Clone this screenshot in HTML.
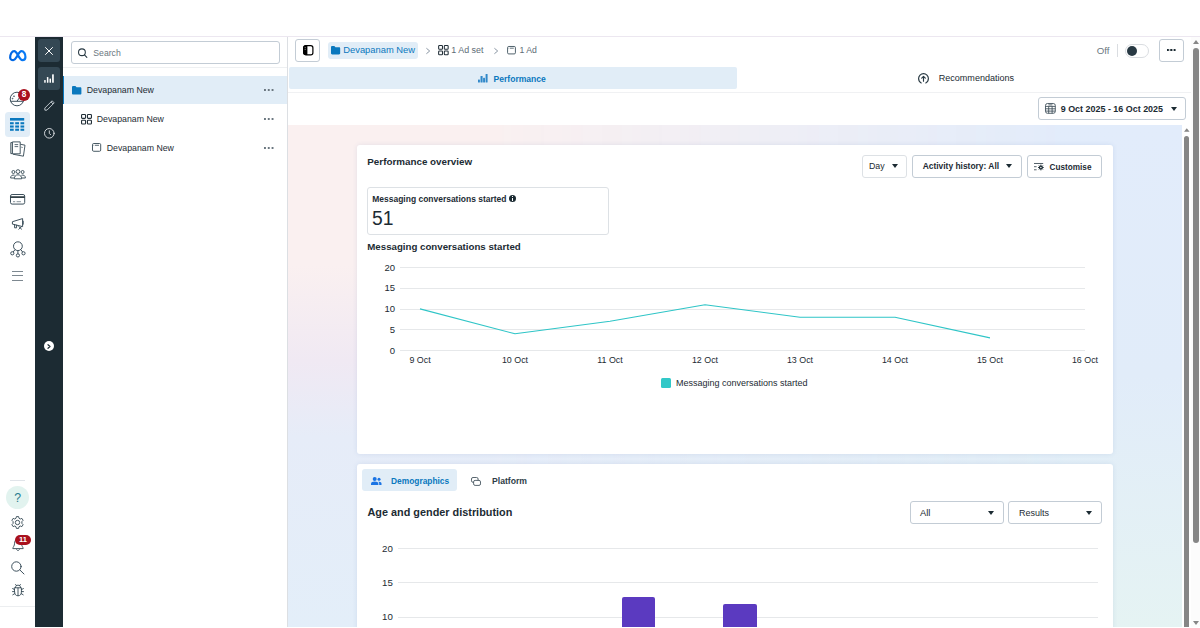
<!DOCTYPE html>
<html>
<head>
<meta charset="utf-8">
<title>Ads Manager</title>
<style>
*{box-sizing:border-box;margin:0;padding:0}
html,body{width:1200px;height:628px;overflow:hidden;background:#fff}
body{font-family:"Liberation Sans",sans-serif;color:#1c2b33;position:relative;font-size:8.75px}
.abs{position:absolute}
.t{position:absolute;white-space:nowrap;line-height:12px;height:12px}
.b{font-weight:700}
svg{position:absolute;overflow:visible;z-index:2}
.btn{position:absolute;border:1px solid #c3ccd5;border-radius:3px;background:#fff}
.gl{position:absolute;height:1px;background:#e6e8ea}
.xl{top:353.5px;width:60px;text-align:center;font-size:8.9px}
.car{position:absolute;z-index:2;width:0;height:0;border-left:3.6px solid transparent;border-right:3.6px solid transparent;border-top:4px solid #1c2b33}
.dots{position:absolute;z-index:2;width:9.6px;height:2px;background:radial-gradient(circle at 1px 1px,#6b7780 0.95px,transparent 1.15px) 0 0/3.8px 2px repeat-x}
.d2{width:9px;height:2.2px;background:radial-gradient(circle at 1.1px 1.1px,#1c2b33 1px,transparent 1.2px) 0 0/3.3px 2.2px repeat-x}
.sb{position:absolute;background:#868686}
</style>
</head>
<body>
<!-- top line -->
<div class="abs" style="left:0;top:36px;width:1200px;height:1px;background:#ece7f0"></div>

<!-- LEFT RAIL -->
<div id="rail" class="abs" style="left:0;top:37px;width:35px;height:591px;background:#fff"></div>
<div class="abs" style="left:0;top:606px;width:35px;height:1px;background:#eceef0"></div>
<!-- meta logo -->
<svg style="left:8.7px;top:49.8px" width="17.6" height="11.3" viewBox="0 0 17.6 11.3"><defs><linearGradient id="mg" x1="0" x2="1" y1="0" y2="0"><stop offset="0" stop-color="#0064e1"/><stop offset="1" stop-color="#0a7cf6"/></linearGradient></defs><path d="M1.15 7.6C1.15 4 3 1.15 5.2 1.15C8.4 1.15 10.1 10.15 13.4 10.15C15.3 10.15 16.45 8.9 16.45 7C16.45 3.8 14.7 1.15 12.5 1.15C9.3 1.15 7.6 10.15 4.2 10.15C2.3 10.15 1.15 9.2 1.15 7.6Z" fill="none" stroke="url(#mg)" stroke-width="2.2" stroke-linejoin="round"/></svg>
<!-- gauge -->
<svg style="left:9px;top:91px" width="16" height="16" viewBox="0 0 16 16" fill="none" stroke="#344854" stroke-width="0.95"><circle cx="8" cy="8" r="6.8"/><path d="M1.6 10.3H14.4"/><path d="M8 10.2L11.5 5.2"/><circle cx="5" cy="5.2" r="0.4"/><circle cx="3.6" cy="7.6" r="0.4"/></svg>
<div class="abs" style="z-index:3;left:18px;top:88.5px;width:12px;height:12px;border-radius:50%;background:#a9111e"></div>
<div class="t b" style="z-index:4;left:18px;top:88.6px;width:12px;text-align:center;color:#fff;font-size:8.2px">8</div>
<!-- table selected -->
<div class="abs" style="left:5px;top:112px;width:25px;height:24.5px;border-radius:3.5px;background:#e1edf7"></div>
<svg style="left:10.3px;top:118px" width="14.2" height="12.8" viewBox="0 0 14.2 12.8" fill="#0a78be"><rect x="0" y="0" width="14.2" height="2.6" /><rect x="0" y="4.2" width="3.7" height="2.1"/><rect x="5.2" y="4.2" width="3.8" height="2.1"/><rect x="10.5" y="4.2" width="3.7" height="2.1"/><rect x="0" y="7.5" width="3.7" height="2.1"/><rect x="5.2" y="7.5" width="3.8" height="2.1"/><rect x="10.5" y="7.5" width="3.7" height="2.1"/><rect x="0" y="10.7" width="3.7" height="2.1"/><rect x="5.2" y="10.7" width="3.8" height="2.1"/><rect x="10.5" y="10.7" width="3.7" height="2.1"/></svg>
<!-- docs -->
<svg style="left:9.5px;top:141px" width="16" height="16" viewBox="0 0 16 16" fill="none" stroke="#344854" stroke-width="0.9" stroke-linejoin="round"><path d="M10.2 3.2L15 4.2L13.4 15.2L3 13.2"/><path d="M0.8 1.6H2.4V12.6H0.8Z"/><path d="M2.4 0.9H10.2V12.8H2.4Z" fill="#fff"/><path d="M4.6 3.6H8.2M4.6 5.6H8.2" stroke-width="0.8"/><path d="M11.3 6.2L12.6 6.5" stroke-width="0.8"/></svg>
<!-- people -->
<svg style="left:9.5px;top:168.5px" width="16" height="10.5" viewBox="0 0 16 10.5" fill="none" stroke="#344854" stroke-width="0.9" stroke-linejoin="round"><circle cx="8" cy="2.6" r="1.9"/><circle cx="3.4" cy="3" r="1.5"/><circle cx="12.6" cy="3" r="1.5"/><path d="M4.3 9.8C4.3 7.4 5.8 5.8 8 5.8C10.2 5.8 11.7 7.4 11.7 9.8Z"/><path d="M4.6 6.3C2.3 5.4 0.6 6.8 0.6 9H4.3"/><path d="M11.4 6.3C13.7 5.4 15.4 6.8 15.4 9H11.7"/></svg>
<!-- card -->
<svg style="left:9.8px;top:193.8px" width="15.2" height="10.6" viewBox="0 0 15.2 10.6" fill="none" stroke="#344854"><rect x="0.5" y="0.5" width="14.2" height="9.6" rx="1.6" stroke-width="0.95"/><path d="M0.5 3.1H14.7" stroke-width="1.6" stroke="#1c2b33"/><path d="M3 7.7H5.2M6.6 7.7H11" stroke-width="0.9" stroke="#7a8790"/></svg>
<!-- megaphone -->
<svg style="left:11.5px;top:218px" width="12.5" height="12" viewBox="0 0 12.5 12" fill="none" stroke="#344854" stroke-width="0.95" stroke-linejoin="round" stroke-linecap="round"><path d="M0.8 3.6L10.6 0.6V8.6L0.8 6.2Z"/><path d="M2.6 6.7V9.8H4.6V7.2"/><path d="M11.2 3.2V6.2"/><path d="M6.8 8.6L9.6 11.2M9.6 8.6L6.8 11.2" stroke-width="0.9"/></svg>
<!-- network -->
<svg style="left:9.5px;top:240.5px" width="16" height="17" viewBox="0 0 16 17" fill="none" stroke="#344854" stroke-width="0.95"><circle cx="7.9" cy="5.2" r="4.4"/><circle cx="2.3" cy="12.3" r="1.6"/><circle cx="13.5" cy="12.3" r="1.6"/><circle cx="7.9" cy="14.4" r="1.6"/><path d="M7.9 9.6V12.8M5 8.6L3.2 11M10.8 8.6L12.6 11"/></svg>
<!-- hamburger -->
<div class="abs" style="left:12px;top:270.5px;width:11.2px;height:1px;background:#7d8890"></div>
<div class="abs" style="left:12px;top:275.2px;width:11.2px;height:1px;background:#7d8890"></div>
<div class="abs" style="left:12px;top:279.9px;width:11.2px;height:1px;background:#7d8890"></div>
<!-- bottom group -->
<div class="abs" style="left:10px;top:480.2px;width:15px;height:1.2px;background:#e0e4e9"></div>
<div class="abs" style="left:6.1px;top:486.4px;width:23px;height:23px;border-radius:50%;background:#e2f3ef"></div>
<div class="t" style="left:6.1px;top:490.7px;width:23px;text-align:center;color:#2a7b8e;font-size:12.3px;line-height:14px;height:14px">?</div>
<!-- gear -->
<svg style="left:11px;top:516px" width="13" height="13" viewBox="0 0 13 13" fill="none" stroke="#344854" stroke-width="0.9" stroke-linejoin="round"><path d="M5.4 0.6H7.6L8 2.3L9.3 3L10.9 2.4L12.1 4.3L10.9 5.6V7.4L12.1 8.7L10.9 10.6L9.3 10L8 10.7L7.6 12.4H5.4L5 10.7L3.7 10L2.1 10.6L0.9 8.7L2.1 7.4V5.6L0.9 4.3L2.1 2.4L3.7 3L5 2.3Z"/><circle cx="6.5" cy="6.5" r="2.2"/></svg>
<!-- bell -->
<svg style="left:11.5px;top:538px" width="12" height="14" viewBox="0 0 12 14" fill="none" stroke="#344854" stroke-width="0.9" stroke-linejoin="round"><path d="M6 1C3.6 1 2.6 3 2.6 5.2C2.6 8 0.8 9.2 0.8 10.6H11.2C11.2 9.2 9.4 8 9.4 5.2C9.4 3 8.4 1 6 1Z"/><path d="M4.4 11.2L6 12.8L7.6 11.2"/></svg>
<div class="abs" style="z-index:3;left:15.2px;top:534.7px;width:15.8px;height:10.2px;border-radius:5.1px;background:#a9111e"></div>
<div class="t b" style="z-index:4;left:15.2px;top:533.9px;width:15.8px;text-align:center;color:#fff;font-size:7.6px">11</div>
<!-- search -->
<svg style="left:10.5px;top:560.5px" width="14" height="14" viewBox="0 0 14 14" fill="none" stroke="#344854" stroke-width="0.95" stroke-linecap="round"><circle cx="5.4" cy="5.5" r="4.7"/><path d="M8.9 9L13 13"/></svg>
<!-- bug -->
<svg style="left:11.5px;top:583.5px" width="12" height="12.5" viewBox="0 0 12 12.5" fill="none" stroke="#344854" stroke-width="0.9" stroke-linecap="round" stroke-linejoin="round"><path d="M3.4 3.6C3.4 2 4.4 1.2 6 1.2C7.6 1.2 8.6 2 8.6 3.6"/><path d="M2.6 3.8H9.4V8.2C9.4 10.4 8 11.8 6 11.8C4 11.8 2.6 10.4 2.6 8.2Z"/><path d="M6 4V11.6"/><path d="M2.6 5.6L0.6 4.6M2.6 7.6H0.5M2.8 9.6L0.8 10.8M9.4 5.6L11.4 4.6M9.4 7.6H11.5M9.2 9.6L11.2 10.8M4.4 1.6L3.6 0.5M7.6 1.6L8.4 0.5"/></svg>


<!-- DARK BAR -->
<div id="dark" class="abs" style="left:35px;top:37px;width:27.5px;height:590px;background:#1c2b33"></div>
<div class="abs" style="left:38px;top:39px;width:22px;height:22.5px;border-radius:3px;background:#344854"></div>
<div class="abs" style="left:38px;top:67px;width:22px;height:22.5px;border-radius:3px;background:#344854"></div>
<svg style="left:45px;top:46.5px" width="8" height="8" viewBox="0 0 8 8" fill="none" stroke="#fff" stroke-width="1" stroke-linecap="round"><path d="M0.5 0.5L7.5 7.5M7.5 0.5L0.5 7.5"/></svg>
<svg style="left:44px;top:73.5px" width="10" height="9" viewBox="0 0 10 9" fill="#fff"><rect x="0.2" y="6" width="1.5" height="2.8" rx="0.5"/><rect x="2.9" y="3" width="1.5" height="5.8" rx="0.5"/><rect x="5.5" y="4.4" width="1.5" height="4.4" rx="0.5"/><rect x="8.1" y="0.2" width="1.7" height="8.6" rx="0.5"/></svg>
<svg style="left:43.5px;top:99.5px" width="11" height="11" viewBox="0 0 11 11" fill="none" stroke="#c9d1d7" stroke-width="0.9" stroke-linejoin="round"><path d="M8.1 0.8L10.2 2.9L3 10.1L0.9 10.2L0.8 8.1Z"/><path d="M7 1.9L9.1 4"/></svg>
<svg style="left:43.5px;top:127.5px" width="11" height="11" viewBox="0 0 11 11" fill="none" stroke="#e4e8eb" stroke-width="0.9" stroke-linecap="round"><circle cx="5.3" cy="5.3" r="4.8"/><path d="M5.3 2.8V5.4L6.6 6.7"/></svg>
<div class="abs" style="left:43.7px;top:341px;width:10px;height:10px;border-radius:50%;background:#fff"></div>
<svg style="left:47.3px;top:343.6px" width="4" height="5" viewBox="0 0 4 5" fill="none" stroke="#1c2b33" stroke-width="1.2" stroke-linecap="round" stroke-linejoin="round"><path d="M1 0.7L3 2.5L1 4.3"/></svg>


<!-- TREE PANEL -->
<div id="tree" class="abs" style="left:62.5px;top:37px;width:225px;height:590px;background:#fff"></div>
<div class="abs" style="left:287px;top:37px;width:1px;height:590px;background:#dcdfe3"></div>
<div class="abs" style="left:63px;top:67px;width:224px;height:1px;background:#eef0f2"></div>
<div class="btn" style="left:71px;top:41px;width:208.5px;height:22.5px"></div>
<div class="t" style="left:93.3px;top:46.8px;color:#6b7780;font-size:8.68px">Search</div>
<!-- selected row -->
<div class="abs" style="left:63px;top:75.5px;width:224px;height:28.5px;background:#e1edf7"></div>
<div class="abs" style="left:62.5px;top:75.5px;width:1.5px;height:28.5px;background:#0a78be"></div>
<div class="t" style="left:86.8px;top:84.3px">Devapanam New</div>
<div class="t" style="left:96.8px;top:113.3px">Devapanam New</div>
<div class="t" style="left:106.8px;top:142px">Devapanam New</div>
<svg style="left:77.9px;top:47.6px" width="9.4" height="10.2" viewBox="0 0 11 12" fill="none" stroke="#283943" stroke-width="1.25" stroke-linecap="round"><circle cx="4.6" cy="5" r="4"/><path d="M7.6 8L10.4 11"/></svg>
<svg style="left:71.8px;top:85.6px" width="9.4" height="8.6" viewBox="0 0 9.4 8.6"><path d="M0 1.2C0 0.5 0.5 0 1.2 0H3.4L4.6 1.3H8.4C9 1.3 9.4 1.8 9.4 2.4V7.4C9.4 8.1 8.9 8.6 8.2 8.6H1.2C0.5 8.6 0 8.1 0 7.4Z" fill="#0a78be"/></svg>
<svg style="left:80.8px;top:113.5px" width="11" height="10.6" viewBox="0 0 11 10.6" fill="none" stroke="#222f38" stroke-width="1.1"><rect x="0.55" y="0.55" width="4" height="3.8" rx="0.8"/><rect x="6.45" y="0.55" width="4" height="3.8" rx="0.8"/><rect x="0.55" y="6.25" width="4" height="3.8" rx="0.8"/><rect x="6.45" y="6.25" width="4" height="3.8" rx="0.8"/></svg>
<svg style="left:91.8px;top:143px" width="9.2" height="8.8" viewBox="0 0 9.2 8.8" fill="none" stroke="#344854" stroke-width="0.9"><rect x="0.5" y="0.5" width="8.2" height="7.8" rx="1.2"/><path d="M3 2.3H7" stroke-width="0.8"/><path d="M1.6 2.3H2.2" stroke-width="0.8"/></svg>
<div class="dots" style="left:264px;top:89px"></div><div class="dots" style="left:264px;top:118px"></div><div class="dots" style="left:264px;top:146.7px"></div>


<!-- MAIN -->
<div id="main" class="abs" style="left:288px;top:37px;width:903px;height:590px;background:#fff"></div>
<!-- header row -->
<div class="btn" style="left:295px;top:39px;width:25px;height:22.5px"></div>
<div class="abs" style="left:327.5px;top:42px;width:90.5px;height:17px;border-radius:3px;background:#e1edf7"></div>
<div class="t" style="left:343.3px;top:44.1px;color:#0a78be;font-size:9.36px">Devapanam New</div>
<div class="t" style="left:451.3px;top:44.1px;color:#5d6c76;font-size:8.9px">1 Ad set</div>
<div class="t" style="left:519.5px;top:44.1px;color:#5d6c76;font-size:8.7px">1 Ad</div>
<div class="t" style="left:1096.7px;top:44.5px;color:#6b7780;font-size:9.7px">Off</div>
<div class="abs" style="left:1117px;top:44px;width:1px;height:13px;background:#dadde1"></div>
<div class="abs" style="left:1124.5px;top:44px;width:24.5px;height:13.5px;border-radius:7px;border:1px solid #dadde1;background:#fff"></div>
<div class="abs" style="left:1126.7px;top:45.5px;width:10.2px;height:10.2px;border-radius:50%;background:#283943"></div>
<div class="btn" style="left:1158.7px;top:39px;width:25.3px;height:22.5px"></div>
<svg style="left:302.5px;top:45.2px" width="10.5" height="10.4" viewBox="0 0 10.5 10.4"><rect x="0.6" y="0.6" width="9.3" height="9.2" rx="2.1" fill="#fff" stroke="#000" stroke-width="1.2"/><path d="M2.6 0.3H4.4V10.1H2.6C1.2 10.1 0.2 9.1 0.2 7.7V2.7C0.2 1.3 1.2 0.3 2.6 0.3Z" fill="#000"/><rect x="1.6" y="2.2" width="1.3" height="0.9" fill="#777"/><rect x="1.6" y="3.9" width="1.3" height="0.9" fill="#777"/></svg>
<svg style="left:330.5px;top:46.2px" width="9.2" height="8.4" viewBox="0 0 9.4 8.6"><path d="M0 1.2C0 0.5 0.5 0 1.2 0H3.4L4.6 1.3H8.4C9 1.3 9.4 1.8 9.4 2.4V7.4C9.4 8.1 8.9 8.6 8.2 8.6H1.2C0.5 8.6 0 8.1 0 7.4Z" fill="#0a78be"/></svg>
<svg style="left:425.5px;top:47.5px" width="4.4" height="6" viewBox="0 0 4.4 6" fill="none" stroke="#8a96a3" stroke-width="1" stroke-linecap="round" stroke-linejoin="round"><path d="M0.7 0.5L3.7 3L0.7 5.5"/></svg>
<svg style="left:494px;top:47.5px" width="4.4" height="6" viewBox="0 0 4.4 6" fill="none" stroke="#8a96a3" stroke-width="1" stroke-linecap="round" stroke-linejoin="round"><path d="M0.7 0.5L3.7 3L0.7 5.5"/></svg>
<svg style="left:438px;top:45.4px" width="10.8" height="10.2" viewBox="0 0 11 10.6" fill="none" stroke="#222f38" stroke-width="1.1"><rect x="0.55" y="0.55" width="4" height="3.8" rx="0.8"/><rect x="6.45" y="0.55" width="4" height="3.8" rx="0.8"/><rect x="0.55" y="6.25" width="4" height="3.8" rx="0.8"/><rect x="6.45" y="6.25" width="4" height="3.8" rx="0.8"/></svg>
<svg style="left:507px;top:46.2px" width="9" height="8.4" viewBox="0 0 9.2 8.8" fill="none" stroke="#344854" stroke-width="0.9"><rect x="0.5" y="0.5" width="8.2" height="7.8" rx="1.2"/><path d="M3 2.3H7" stroke-width="0.8"/><path d="M1.6 2.3H2.2" stroke-width="0.8"/></svg>
<div class="dots d2" style="left:1167px;top:49.4px"></div>
<svg style="left:478.4px;top:73.5px" width="9.6" height="8.6" viewBox="0 0 9.6 8.6" fill="#3088c9"><rect x="0" y="5.6" width="1.9" height="3" rx="0.5"/><rect x="2.5" y="2" width="2.1" height="6.6" rx="0.5"/><rect x="5.1" y="3.8" width="1.9" height="4.8" rx="0.5"/><rect x="7.6" y="0" width="2" height="8.6" rx="0.5"/></svg>
<svg style="left:918.3px;top:72.5px" width="11" height="11" viewBox="0 0 11 11" fill="none" stroke="#283943" stroke-width="1.15" stroke-linecap="round" stroke-linejoin="round"><path d="M3.2 9.9C1.6 9.1 0.6 7.4 0.6 5.5C0.6 2.8 2.8 0.6 5.5 0.6C8.2 0.6 10.4 2.8 10.4 5.5C10.4 7.4 9.4 9.1 7.8 9.9"/><path d="M5.5 8.2V3.6M3.7 5.2L5.5 3.4L7.3 5.2"/></svg>
<svg style="left:1045.1px;top:103.1px" width="10.8" height="10.8" viewBox="0 0 10.8 10.8" fill="none" stroke="#3a4a55" stroke-width="0.85"><rect x="0.5" y="0.5" width="9.8" height="9.8" rx="2"/><path d="M0.5 3.4H10.3M0.5 5.8H10.3M0.5 8.1H10.3M3.7 3.4V10.3M7.1 3.4V10.3M3.4 1.9H7.4"/></svg>
<div class="car" style="left:1170.5px;top:106.8px"></div>

<!-- tabs -->
<div class="abs" style="left:289px;top:67px;width:448px;height:22px;border-radius:2px;background:#e1edf7"></div>
<div class="t b" style="left:493.5px;top:72.5px;color:#0a78be;font-size:8.57px">Performance</div>
<div class="t" style="left:938.7px;top:72.3px;font-size:9.05px">Recommendations</div>
<div class="abs" style="left:288px;top:92px;width:903px;height:1px;background:#f0f1f3"></div>
<!-- date button -->
<div class="btn" style="left:1038px;top:97px;width:148.3px;height:22.7px"></div>
<div class="t b" style="left:1060.7px;top:102.7px;font-size:8.95px">9 Oct 2025 - 16 Oct 2025</div>

<!-- CONTENT BG -->
<div id="content" class="abs" style="left:288px;top:125px;width:894px;height:502px;background:linear-gradient(to bottom, #e2ecfb 0%, #e1ecf9 50%, #e5f3f3 100%)"></div>
<div class="abs" style="left:288px;top:125px;width:894px;height:502px;background:linear-gradient(to bottom, #faf0f0 0%, #faf0f0 28%, #f0e9f3 47%, #e6ecf8 62%, #e3eef9 100%);-webkit-mask-image:linear-gradient(to right,#000 0%,#000 22%,transparent 88%);mask-image:linear-gradient(to right,#000 0%,#000 22%,transparent 88%)"></div>

<!-- SCROLLBARS -->
<div class="abs" style="left:1191px;top:37px;width:9px;height:590px;background:#fcfcfc"></div>
<div class="sb" style="left:1193.2px;top:47.5px;width:5.5px;height:495px;border-radius:3px"></div>
<svg style="left:1193px;top:39.8px" width="6" height="4" viewBox="0 0 6 4"><path d="M3 0L6 4H0Z" fill="#868686"/></svg>
<svg style="left:1193px;top:620.5px" width="6" height="4" viewBox="0 0 6 4"><path d="M0 0H6L3 4Z" fill="#868686"/></svg>
<div class="sb" style="left:1184.2px;top:136px;width:4.8px;height:495px;border-radius:3px"></div>
<svg style="left:1183.8px;top:128.2px" width="5.6" height="4" viewBox="0 0 6 4"><path d="M3 0L6 4H0Z" fill="#868686"/></svg>

<!-- CARD 1 -->
<div id="card1" class="abs" style="left:357px;top:145px;width:755.5px;height:308.6px;background:#fff;border-radius:3px;box-shadow:0 0 5px rgba(40,90,150,0.10)"></div>
<div class="t b" style="left:367.3px;top:155.7px;font-size:9.84px">Performance overview</div>
<div class="btn" style="left:862px;top:155.3px;width:45.3px;height:22.5px;border-color:#dde1e5"></div>
<div class="t" style="left:869px;top:160px;font-size:8.8px">Day</div>
<div class="btn" style="left:912.3px;top:155.3px;width:109.4px;height:22.5px"></div>
<div class="t b" style="left:922.7px;top:160px;font-size:8.44px">Activity history: All</div>
<div class="btn" style="left:1026.7px;top:155.3px;width:75.6px;height:22.5px"></div>
<div class="t b" style="left:1049.6px;top:161.6px;font-size:8.2px">Customise</div>

<div class="btn" style="left:367.3px;top:187.3px;width:241.7px;height:47.5px;border-color:#dde1e5"></div>
<div class="t b" style="left:372.3px;top:193px;font-size:8.48px">Messaging conversations started</div>
<div class="t" style="left:372px;top:206.5px;font-size:19.3px;line-height:24px;height:24px">51</div>
<div class="t b" style="left:367.3px;top:240.6px;font-size:9.7px">Messaging conversations started</div>
<div class="gl" style="left:400px;top:267px;width:685px"></div>
<div class="gl" style="left:400px;top:288px;width:685px"></div>
<div class="gl" style="left:400px;top:308.5px;width:685px"></div>
<div class="gl" style="left:400px;top:329px;width:685px"></div>
<div class="gl" style="left:400px;top:350px;width:685px"></div>
<div class="t" style="left:374.6px;width:20.5px;text-align:right;top:261.5px;font-size:9.5px">20</div>
<div class="t" style="left:374.6px;width:20.5px;text-align:right;top:282.3px;font-size:9.5px">15</div>
<div class="t" style="left:374.6px;width:20.5px;text-align:right;top:303px;font-size:9.5px">10</div>
<div class="t" style="left:374.6px;width:20.5px;text-align:right;top:323.8px;font-size:9.5px">5</div>
<div class="t" style="left:374.6px;width:20.5px;text-align:right;top:344.5px;font-size:9.5px">0</div>
<div class="t xl" style="left:390px">9 Oct</div>
<div class="t xl" style="left:485px">10 Oct</div>
<div class="t xl" style="left:580px">11 Oct</div>
<div class="t xl" style="left:675px">12 Oct</div>
<div class="t xl" style="left:770px">13 Oct</div>
<div class="t xl" style="left:865px">14 Oct</div>
<div class="t xl" style="left:960px">15 Oct</div>
<div class="t xl" style="left:1055px">16 Oct</div>
<svg style="left:0;top:0" width="1200" height="628"><polyline fill="none" stroke="#2fc5c7" stroke-width="1.1" stroke-linejoin="round" points="420,308.9 515,333.8 610,321.3 705,304.7 800,317.2 895,317.2 990,337.9"/></svg>
<div class="abs" style="left:661px;top:377.7px;width:10px;height:10px;border-radius:1.5px;background:#32c8c8"></div>
<div class="t" style="left:676px;top:377px;font-size:9px">Messaging conversations started</div>

<div class="car" style="left:891.7px;top:164.2px"></div>
<div class="car" style="left:1005.8px;top:164.2px"></div>
<svg style="left:1034.4px;top:162.7px" width="10" height="7.6" viewBox="0 0 10 7.6" fill="none" stroke="#283943" stroke-width="0.8"><path d="M0 0.5H9.2M0 3.7H2.6M0 6.8H2.6"/><circle cx="6.9" cy="4.5" r="1.9" fill="#1c2b33" stroke="none"/><path d="M6.9 1.6V7.4M4 4.5H9.8M4.9 2.5L8.9 6.5M8.9 2.5L4.9 6.5" stroke="#1c2b33" stroke-width="0.9"/><circle cx="6.9" cy="4.5" r="0.75" fill="#fff" stroke="none"/></svg>
<div class="abs" style="left:509.3px;top:195.1px;width:7.2px;height:7.2px;border-radius:50%;background:#1c2b33"></div>
<div class="abs" style="left:512.4px;top:196.4px;width:1px;height:1px;background:#fff"></div>
<div class="abs" style="left:512.4px;top:198px;width:1px;height:3px;background:#fff"></div>
<!--CHART1X-->
<!-- CARD 2 -->
<div id="card2" class="abs" style="left:357px;top:463.8px;width:755.5px;height:170px;background:#fff;border-radius:3px 3px 0 0;box-shadow:0 0 5px rgba(40,90,150,0.10)"></div>
<div class="abs" style="left:362px;top:469px;width:95px;height:22px;border-radius:3px;background:#e1edf7"></div>
<div class="t b" style="left:391px;top:474.8px;font-size:8.4px;color:#0a78be">Demographics</div>
<div class="t b" style="left:492px;top:474.6px;font-size:8.63px;color:#2e3d47">Platform</div>
<div class="t b" style="left:367.5px;top:506.3px;font-size:10.86px">Age and gender distribution</div>
<div class="btn" style="left:910px;top:501.4px;width:93.6px;height:22.2px"></div>
<div class="t" style="left:920px;top:506.5px;font-size:9.35px">All</div>
<div class="btn" style="left:1008.4px;top:501.4px;width:94px;height:22.2px"></div>
<div class="t" style="left:1019px;top:506.5px;font-size:9px">Results</div>
<div class="gl" style="left:398.3px;top:548.3px;width:699.3px"></div>
<div class="gl" style="left:398.3px;top:582.3px;width:699.3px"></div>
<div class="gl" style="left:398.3px;top:616.5px;width:699.3px"></div>
<div class="t" style="left:372.1px;width:20.7px;text-align:right;top:542.7px;font-size:9.7px">20</div>
<div class="t" style="left:372.1px;width:20.7px;text-align:right;top:576.7px;font-size:9.7px">15</div>
<div class="t" style="left:372.1px;width:20.7px;text-align:right;top:611px;font-size:9.7px">10</div>
<div class="abs" style="left:621.7px;top:596.5px;width:33.3px;height:30.5px;background:#5b3ac0;border-radius:2px 2px 0 0"></div>
<div class="abs" style="left:723.4px;top:603.5px;width:33.6px;height:23.5px;background:#5b3ac0;border-radius:2px 2px 0 0"></div>

<svg style="left:370.5px;top:476.8px" width="10.5" height="8" viewBox="0 0 10.5 8" fill="#1b74e4"><circle cx="3.7" cy="2" r="2"/><path d="M0 8V6.7C0 5.4 1.6 4.6 3.7 4.6C5.8 4.6 7.4 5.4 7.4 6.7V8Z"/><circle cx="8" cy="2.3" r="1.5"/><path d="M8.2 8V6.6C8.2 5.8 7.8 5.2 7.2 4.8C7.5 4.7 7.8 4.7 8 4.7C9.5 4.7 10.5 5.4 10.5 6.5V8Z"/></svg>
<svg style="left:471px;top:476.8px" width="10" height="9" viewBox="0 0 10 9" fill="none" stroke="#46555f" stroke-width="0.9"><rect x="0.5" y="0.5" width="6.6" height="4.8" rx="1.5"/><rect x="2.6" y="3.4" width="6.9" height="5" rx="1.5" fill="#fff"/></svg>
<div class="car" style="left:987.8px;top:510.6px"></div>
<div class="car" style="left:1086.2px;top:510.6px"></div>
<!--CHART2X-->
<div class="abs" style="z-index:6;left:0;top:627px;width:1200px;height:1px;background:#fff"></div>
</body>
</html>
